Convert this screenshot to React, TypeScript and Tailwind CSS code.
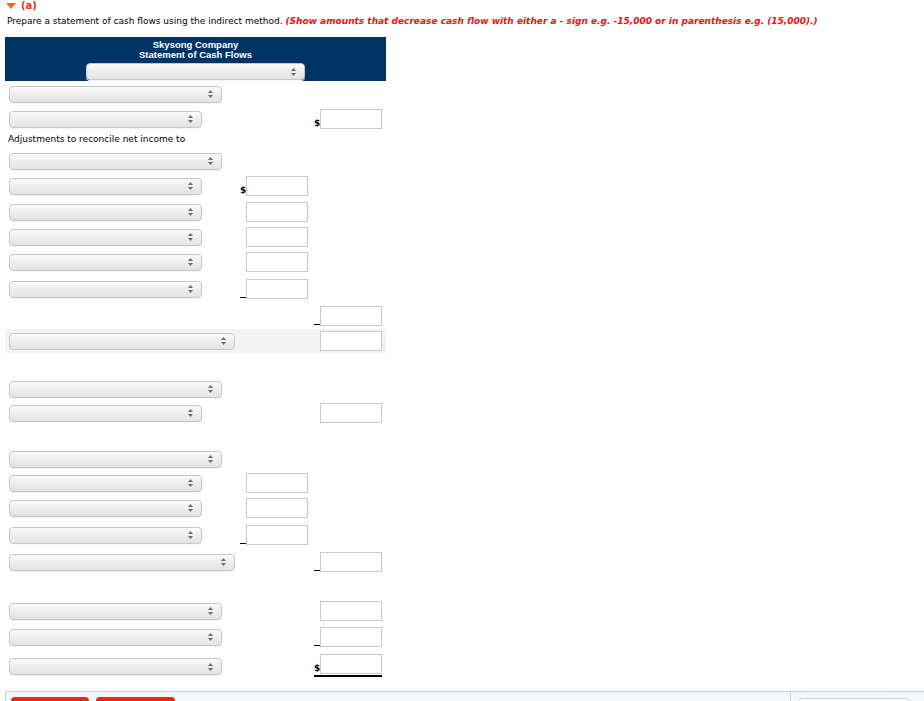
import React from "react";

type Prefix = "$" | "_" | "";

const selWidths: Record<string, string> = {
  long: "w-[213px]",
  short: "w-[193px]",
  wide: "w-[226px]",
};

function Arrows() {
  return (
    <svg width="5" height="8" viewBox="0 0 5 8" className="shrink-0">
      <path d="M2.5 0 L5 3 L0 3 Z" fill="#6b6b6b" />
      <path d="M0 5 L5 5 L2.5 8 Z" fill="#6b6b6b" />
    </svg>
  );
}

function FakeSelect({ width }: { width: string }) {
  return (
    <div
      className={`${width} h-[17px] flex items-center justify-end pr-[8px] rounded-[4px] border border-[#c6c6c6] bg-gradient-to-b from-[#fbfbfb] via-[#ededed] to-[#e4e4e4] shadow-[0_1px_0_#f5f5f5]`}
    >
      <Arrows />
    </div>
  );
}

function Amount({ prefix }: { prefix: Prefix }) {
  return (
    <div className="flex items-end">
      <div className="w-[6px] h-[20px] flex items-end justify-start">
        {prefix === "$" && (
          <span className="text-[9px] font-bold leading-[11px] text-black">$</span>
        )}
        {prefix === "_" && <span className="block w-[6px] h-[1px] bg-black mb-[1px]" />}
      </div>
      <input
        type="text"
        className="w-[62px] h-[20px] border border-[#c9c9c9] bg-white outline-none"
      />
    </div>
  );
}

type RowProps = {
  sel?: "long" | "short" | "wide";
  mid?: Prefix;
  right?: Prefix;
  mt: string;
  gray?: boolean;
};

function Row({ sel, mid, right, mt, gray }: RowProps) {
  return (
    <div
      className={`${mt} ${gray ? "h-[24px] bg-[#f3f3f3]" : "h-[20px]"} pl-[4px] grid grid-cols-[231px_74px_68px] items-center`}
    >
      <div>{sel && <FakeSelect width={selWidths[sel]} />}</div>
      <div>{mid !== undefined && <Amount prefix={mid} />}</div>
      <div>{right !== undefined && <Amount prefix={right} />}</div>
    </div>
  );
}

export default function App() {
  return (
    <div className="w-[924px] h-[701px] overflow-hidden bg-white text-black font-['DejaVu_Sans',Verdana,sans-serif]">
      {/* Part heading */}
      <div className="flex items-center h-[11px] pl-[6px]">
        <svg width="10" height="6" viewBox="0 0 10 6">
          <path d="M0 0 L10 0 L5 6 Z" fill="#f26a1b" />
        </svg>
        <span className="ml-[5px] text-[10px] font-bold leading-[11px] text-[#e4321b]">(a)</span>
      </div>
      <p className="mt-[4px] pl-[7px] text-[9px] leading-[12px] whitespace-nowrap">
        Prepare a statement of cash flows using the indirect method.{" "}
        <span className="font-bold italic text-[#f01010]">
          (Show amounts that decrease cash flow with either a - sign e.g. -15,000 or in parenthesis e.g. (15,000).)
        </span>
      </p>

      <div className="ml-[5px] w-[381px]">
        {/* Header */}
        <div className="mt-[10px] h-[44px] bg-[#003366] flex flex-col items-center pt-[3px]">
          <div className="text-white font-bold text-[9.5px] leading-[10px] text-center font-['Liberation_Sans',Arial,sans-serif]">
            Skysong Company
          </div>
          <div className="text-white font-bold text-[9.5px] leading-[10px] text-center font-['Liberation_Sans',Arial,sans-serif]">
            Statement of Cash Flows
          </div>
          <div className="mt-[3px]">
            <FakeSelect width="w-[219px]" />
          </div>
        </div>

        <Row mt="mt-[3px]" sel="long" />
        <Row mt="mt-[5px]" sel="short" right="$" />
        <div className="mt-[4px] h-[13px] pl-[3px] text-[9px] leading-[13px]">
          Adjustments to reconcile net income to
        </div>
        <Row mt="mt-[5px]" sel="long" />
        <Row mt="mt-[5px]" sel="short" mid="$" />
        <Row mt="mt-[6px]" sel="short" mid="" />
        <Row mt="mt-[5px]" sel="short" mid="" />
        <Row mt="mt-[5px]" sel="short" mid="" />
        <Row mt="mt-[7px]" sel="short" mid="_" />
        <Row mt="mt-[7px]" right="_" />
        <Row mt="mt-[3px]" sel="wide" right="" gray />

        <Row mt="mt-[26px]" sel="long" />
        <Row mt="mt-[4px]" sel="short" right="" />

        <Row mt="mt-[26px]" sel="long" />
        <Row mt="mt-[4px]" sel="short" mid="" />
        <Row mt="mt-[5px]" sel="short" mid="" />
        <Row mt="mt-[7px]" sel="short" mid="_" />
        <Row mt="mt-[7px]" sel="wide" right="_" />

        <Row mt="mt-[29px]" sel="long" right="" />
        <Row mt="mt-[6px]" sel="long" right="_" />

        {/* Final total with double rule */}
        <div className="mt-[7px] h-[24px] pl-[4px] grid grid-cols-[305px_68px] items-start">
          <div className="pt-[4px]">
            <FakeSelect width="w-[213px]" />
          </div>
          <div className="flex flex-col">
            <Amount prefix="$" />
            <div className="mt-[1px] h-[2px] w-[68px] bg-black" />
          </div>
        </div>
      </div>

      {/* Bottom action bar */}
      <div className="mt-[13px] ml-[5px] h-[40px] border-t border-l border-[#c8d0d8] bg-[#f3f7fb] flex">
        <div className="flex-1 flex gap-[7px] pl-[5px] pt-[5px]">
          <div className="w-[78px] h-[30px] rounded-t-[4px] bg-[#e42c00]" />
          <div className="w-[79px] h-[30px] rounded-t-[4px] bg-[#e42c00]" />
        </div>
        <div className="w-[134px] border-l border-[#c8d0d8] pl-[8px] pt-[6px]">
          <div className="w-[110px] h-[30px] rounded-[3px] border border-[#c8d0d8] bg-white" />
        </div>
      </div>
    </div>
  );
}
